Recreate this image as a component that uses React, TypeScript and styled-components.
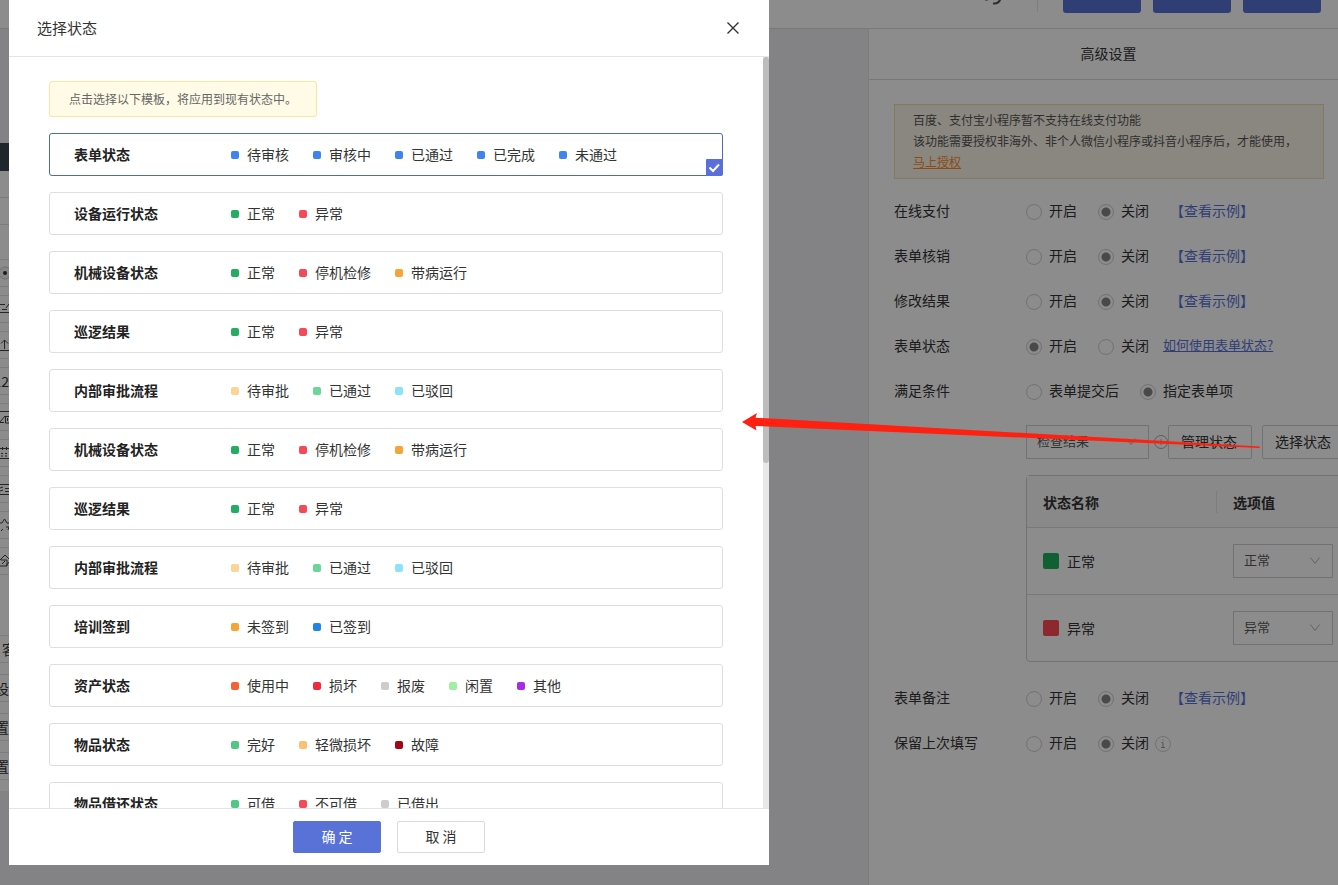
import React, { useState } from "react";
import styled, { createGlobalStyle } from "styled-components";

const brand = "#5872d8";

const GlobalStyle = createGlobalStyle`
  *, *::before, *::after { box-sizing: border-box; }
  body { margin: 0; overflow: hidden; }
  body, button, input, select {
    font-family: "Noto Sans CJK SC", "Noto Sans", sans-serif;
    font-size: 14px;
    color: #333;
  }
  button { cursor: pointer; }
`;

const Page = styled.div`
  position: relative;
  display: flex;
  flex-direction: column;
  height: 100vh;
  overflow: hidden;
  background: #eeeef2;
`;

/* ---------- top bar ---------- */

const TopBar = styled.header`
  display: flex;
  justify-content: flex-end;
  flex: none;
  height: 29px;
  padding-right: 17px;
  overflow: hidden;
  background: #fff;
  border-bottom: 1px solid #dcdcdf;
`;

const TopActions = styled.div`
  display: flex;
  align-items: center;
  gap: 12px;
  height: 32px;
  margin-top: -19px;
`;

const TopButton = styled.button`
  width: 78px;
  height: 32px;
  border: 0;
  border-radius: 3px;
  background: ${brand};
`;

const TopDivider = styled.span`
  width: 1px;
  height: 30px;
  margin-right: 13px;
  background: #e6e6e6;
`;

const TopMark = styled.svg`
  align-self: flex-end;
  margin-right: 22px;
  margin-bottom: 8px;
`;

/* ---------- work area ---------- */

const Workspace = styled.div`
  display: flex;
  flex: 1;
  min-height: 0;
`;

const Palette = styled.aside`
  flex: none;
  width: 9px;
  padding-top: 114px;
  overflow: hidden;
`;

const PaletteHead = styled.div`
  height: 28px;
  background: #3a4750;
`;

const PaletteBody = styled.div`
  padding: 26px 0 11px;
  background: #fff;
`;

const PaletteGroup = styled.div<{ $gap: number; $after: number }>`
  display: flex;
  flex-direction: column;
  gap: ${(p) => p.$gap}px;
  margin-bottom: ${(p) => p.$after}px;
`;

const PaletteItem = styled.button<{ $start?: boolean }>`
  display: flex;
  align-items: center;
  justify-content: ${(p) => (p.$start ? "flex-start" : "flex-end")};
  height: 28px;
  padding: 0 0 0 ${(p) => (p.$start ? 2 : 0)}px;
  border: solid #e2e2e2;
  border-width: 1px 0;
  background: #fff;
  font-size: 14px;
  line-height: 20px;
  white-space: nowrap;
`;

const Canvas = styled.main`
  flex: 1;
`;

const Settings = styled.aside`
  flex: none;
  width: 480px;
  margin-right: -10px;
  background: #fff;
  border-left: 1px solid #e4e4e8;
`;

const SettingsTitle = styled.h2`
  margin: 0;
  height: 51px;
  border-bottom: 1px solid #dadada;
  font-size: 14px;
  font-weight: 400;
  line-height: 48px;
  text-align: center;
`;

const SettingsBody = styled.div`
  padding: 24px 24px 0 25px;
`;

const AuthNotice = styled.p`
  margin: 0 0 8px;
  padding: 4px 18px 6px;
  border: 1px solid #eedcae;
  background: #fbf6e9;
  font-size: 12px;
  line-height: 21px;
  color: #555;
`;

const OrangeLink = styled.a`
  display: block;
  width: max-content;
  color: #ff8a1f;
`;

const SettingRow = styled.fieldset`
  display: flex;
  align-items: center;
  height: 45px;
  margin: 0;
  padding: 0;
  border: 0;
  line-height: 20px;
`;

const SettingName = styled.span`
  flex: none;
  width: 132px;
`;

const RadioLabel = styled.label`
  display: flex;
  align-items: center;
  gap: 7px;
  margin-right: 21px;
  white-space: nowrap;
`;

const Radio = styled.input`
  appearance: none;
  width: 16px;
  height: 16px;
  margin: 4px 0 0;
  border: 1px solid #cfcfcf;
  border-radius: 50%;
  background: #fff;
  &:checked {
    background: radial-gradient(circle, #858585 0 4px, transparent 5px);
  }
`;

const ExampleLink = styled.a`
  color: ${brand};
  text-decoration: none;
`;

const HelpLink = styled.a`
  margin-left: -7px;
  color: ${brand};
  font-size: 13px;
`;

const InfoIcon = styled.svg`
  flex: none;
  margin: 4px 0 0 -15px;
`;

const Nested = styled.div`
  margin: 13px -48px 12px 132px;
`;

const FieldLine = styled.div`
  display: flex;
  align-items: center;
  margin-bottom: 16px;
`;

const SelectBox = styled.span<{ $width: number }>`
  display: grid;
  align-items: center;
  width: ${(p) => p.$width}px;
  height: 34px;
  svg {
    grid-area: 1 / 1;
    justify-self: end;
    margin-right: 12px;
    pointer-events: none;
  }
`;

const Select = styled.select`
  grid-area: 1 / 1;
  appearance: none;
  width: 100%;
  height: 34px;
  padding: 0 10px 3px;
  border: 1px solid #d0d0d0;
  border-radius: 0;
  background: #fff;
  color: #5a5a5a;
  font-size: 13px;
`;

const PlusIcon = styled.svg`
  flex: none;
  margin-left: 4px;
`;

const OutlineButton = styled.button`
  flex: none;
  width: 84px;
  height: 34px;
  margin-right: 10px;
  padding: 0 2px 2px 0;
  border: 1px solid #d0d0d0;
  border-radius: 2px;
  background: #fff;
`;

const StatusTable = styled.table`
  width: 100%;
  border: 1px solid #d0d0d0;
  border-radius: 4px;
  border-spacing: 0;
  table-layout: fixed;
  th, td {
    padding: 0 0 0 16px;
    text-align: left;
    line-height: 20px;
  }
  th { height: 51px; background: #fafafa; }
  td { height: 67px; border-top: 1px solid #dcdcdc; }
  th:first-child, td:first-child { width: 190px; }
`;

const HeadCell = styled.div`
  display: flex;
  align-items: center;
  justify-content: space-between;
`;

const HeadDivider = styled.span`
  width: 1px;
  height: 22px;
  background: #e4e4e4;
`;

const Status = styled.span`
  display: flex;
  align-items: center;
  gap: 8px;
`;

const Swatch = styled.span<{ $color: string }>`
  width: 16px;
  height: 16px;
  border-radius: 2px;
  background: ${(p) => p.$color};
`;

/* ---------- dialog ---------- */

const Mask = styled.div`
  position: absolute;
  inset: 0;
  padding: 0 9px 20px;
  background: rgba(0, 0, 0, 0.45);
`;

const Dialog = styled.section`
  display: flex;
  flex-direction: column;
  width: 760px;
  max-width: 100%;
  height: 100%;
  background: #fff;
`;

const DialogHead = styled.header`
  display: flex;
  align-items: center;
  justify-content: space-between;
  flex: none;
  height: 57px;
  padding: 0 28px;
  border-bottom: 1px solid #e4e4e4;
`;

const DialogTitle = styled.h1`
  margin: 0;
  padding-bottom: 2px;
  font-size: 15px;
  font-weight: 400;
`;

const CloseButton = styled.button`
  display: grid;
  place-items: center;
  width: 16px;
  height: 16px;
  padding: 0;
  border: 0;
  background: none;
`;

const DialogMain = styled.div`
  display: flex;
  flex: 1;
  min-height: 0;
`;

const ScrollArea = styled.div`
  flex: 1;
  padding: 24px 40px 0;
  overflow: hidden;
`;

const ScrollTrack = styled.div`
  flex: none;
  width: 6px;
  background: #e8e8e8;
`;

const ScrollThumb = styled.div`
  height: 54%;
  border-radius: 3px;
  background: #bdbdbd;
`;

const Tip = styled.p`
  width: max-content;
  margin: 0 0 16px;
  padding: 0 19px;
  border: 1px solid #f5e8a0;
  border-radius: 3px;
  background: #fffbe6;
  color: #666;
  font-size: 12px;
  line-height: 34px;
`;

const Template = styled.label<{ $active: boolean }>`
  position: relative;
  display: flex;
  align-items: center;
  height: 43px;
  margin-bottom: 16px;
  padding: 0 0 2px 24px;
  border: 1px solid ${(p) => (p.$active ? "#5069b8" : "#dedede")};
  border-radius: 3px;
  line-height: 20px;
  cursor: pointer;
`;

const HiddenRadio = styled.input`
  position: absolute;
  opacity: 0;
  pointer-events: none;
`;

const TemplateName = styled.strong`
  flex: none;
  width: 157px;
  font-weight: 700;
  color: #222;
`;

const Options = styled.span`
  display: flex;
  gap: 24px;
`;

const Option = styled.span`
  display: flex;
  align-items: center;
  gap: 8px;
`;

const Dot = styled.span<{ $color: string }>`
  width: 8px;
  height: 8px;
  margin-top: 2px;
  border-radius: 2px;
  background: ${(p) => p.$color};
`;

const CheckBadge = styled.svg`
  position: absolute;
  right: -1px;
  bottom: -1px;
`;

const DialogFoot = styled.footer`
  display: flex;
  justify-content: center;
  gap: 16px;
  flex: none;
  height: 57px;
  padding-top: 12px;
  border-top: 1px solid #e4e4e4;
`;

const FootButton = styled.button<{ $primary?: boolean }>`
  width: 88px;
  height: 32px;
  padding: 0 0 2px;
  border: 1px solid ${(p) => (p.$primary ? brand : "#d9d9d9")};
  border-radius: 2px;
  background: ${(p) => (p.$primary ? brand : "#fff")};
  color: ${(p) => (p.$primary ? "#fff" : "#333")};
`;

const Arrow = styled.svg`
  position: absolute;
  top: 412px;
  left: 742px;
  pointer-events: none;
`;

/* ---------- data ---------- */

const blue = "#3f83f0";
const green = "#23ac62";
const red = "#f5495a";
const orange = "#f7a436";

type TemplateData = { name: string; options: [string, string][] };

const machine: TemplateData = {
  name: "机械设备状态",
  options: [["正常", green], ["停机检修", red], ["带病运行", orange]],
};
const patrol: TemplateData = { name: "巡逻结果", options: [["正常", green], ["异常", red]] };
const approval: TemplateData = {
  name: "内部审批流程",
  options: [["待审批", "#fcd497"], ["已通过", "#6bd69a"], ["已驳回", "#8fe0fb"]],
};

const templates: TemplateData[] = [
  {
    name: "表单状态",
    options: [["待审核", blue], ["审核中", blue], ["已通过", blue], ["已完成", blue], ["未通过", blue]],
  },
  { name: "设备运行状态", options: [["正常", green], ["异常", red]] },
  machine,
  patrol,
  approval,
  machine,
  patrol,
  approval,
  { name: "培训签到", options: [["未签到", orange], ["已签到", "#1f86e8"]] },
  {
    name: "资产状态",
    options: [["使用中", "#f26334"], ["损坏", "#ee2a3f"], ["报废", "#cccccc"], ["闲置", "#a2eda6"], ["其他", "#a82ae6"]],
  },
  { name: "物品状态", options: [["完好", "#52c785"], ["轻微损坏", "#fdc072"], ["故障", "#a30514"]] },
  { name: "物品借还状态", options: [["可借", "#52c785"], ["不可借", red], ["已借出", "#cccccc"]] },
];

const switches = ["开启", "关闭"];
const stroke = { fill: "none", stroke: "#444", strokeWidth: 1 };

const fieldIcons: [string, React.ReactNode][] = [
  ["单选", <><circle cx="5" cy="13" r="6" fill="#f4f4f4" stroke="#ccc" /><circle cx="5" cy="13" r="2" fill="#333" /></>],
  ["多行文字", <path {...stroke} d="M0 8.500h5M2 13.500h5M6 12l3-4M0 16.500h9" />],
  ["上传", <path {...stroke} d="M0 18.500h9M4.500 17V8M1 11.500l3.500-3.500L8 11.500" />],
  ["图片", <path {...stroke} d="M0 7.500h9M0 18l5-6M0 18.500h4M5.500 12v7H9M5.500 12.500H9M7.500 14v3" />],
  ["表格", <path {...stroke} d="M0 8.500h9M0 18.500h9M2.500 7v3M6.500 7v3M1 13.500h2M5 13.500h2M1 16h2M5 16h2" />],
  ["列表", <path {...stroke} d="M0 8.500h9M0 18.500h9M0 12l3-1M0 15l3-1M5 12.500h4M5 15.500h4" />],
  ["评分", <path {...stroke} d="M0 11h2l2.500-4L7 11h2M1 19l2-2M6 15h3l-1 3" />],
  ["签名", <path {...stroke} d="M0 12l5-5 4 4M1 12h6v6H0M6 18l3-4M2 16l3-3" />],
];

/* ---------- pieces ---------- */

function Chevron() {
  return (
    <svg width="12" height="12" viewBox="0 0 12 12" fill="none" stroke="#b5b5b5">
      <path d="M1.500 2.500l4.500 6 4.500-6" />
    </svg>
  );
}

function PickField({ label, value, width }: { label: string; value: string; width: number }) {
  return (
    <SelectBox $width={width}>
      <Select aria-label={label} defaultValue={value}>
        <option>{value}</option>
      </Select>
      <Chevron />
    </SelectBox>
  );
}

function Setting(props: { name: string; choices?: string[]; picked: number; children?: React.ReactNode }) {
  const { name, choices = switches, picked, children } = props;
  return (
    <SettingRow aria-label={name}>
      <SettingName>{name}</SettingName>
      {choices.map((choice, i) => (
        <RadioLabel key={choice}>
          <Radio type="radio" name={name} defaultChecked={i === picked} />
          {choice}
        </RadioLabel>
      ))}
      {children}
    </SettingRow>
  );
}

const Example = () => <ExampleLink href="#example">【查看示例】</ExampleLink>;

function PalettePanel() {
  const icon = ([name, art]: [string, React.ReactNode]) => (
    <PaletteItem key={name} aria-label={name}>
      <svg width="9" height="26" viewBox="0 0 9 26">{art}</svg>
    </PaletteItem>
  );
  return (
    <Palette>
      <PaletteHead />
      <PaletteBody>
        <PaletteGroup $gap={8} $after={34}>
          <PaletteItem aria-label="字段" />
        </PaletteGroup>
        <PaletteGroup $gap={8} $after={60}>
          {fieldIcons.slice(0, 3).map(icon)}
          <PaletteItem>12</PaletteItem>
          {fieldIcons.slice(3).map(icon)}
        </PaletteGroup>
        <PaletteGroup $gap={11} $after={0}>
          <PaletteItem $start>客</PaletteItem>
          <PaletteItem>设</PaletteItem>
          <PaletteItem>置</PaletteItem>
          <PaletteItem>置</PaletteItem>
        </PaletteGroup>
      </PaletteBody>
    </Palette>
  );
}

function SettingsPanel() {
  return (
    <Settings>
      <SettingsTitle>高级设置</SettingsTitle>
      <SettingsBody>
        <AuthNotice>
          百度、支付宝小程序暂不支持在线支付功能
          <br />
          该功能需要授权非海外、非个人微信小程序或抖音小程序后，才能使用，
          <OrangeLink href="#auth">马上授权</OrangeLink>
        </AuthNotice>
        <Setting name="在线支付" picked={1}><Example /></Setting>
        <Setting name="表单核销" picked={1}><Example /></Setting>
        <Setting name="修改结果" picked={1}><Example /></Setting>
        <Setting name="表单状态" picked={0}>
          <HelpLink href="#help">如何使用表单状态?</HelpLink>
        </Setting>
        <Setting name="满足条件" choices={["表单提交后", "指定表单项"]} picked={1} />
        <Nested>
          <FieldLine>
            <PickField label="表单项" value="检查结果" width={123} />
            <PlusIcon width="15" height="16" viewBox="0 0 15 16" fill="none" stroke="#aaa">
              <circle cx="8" cy="8" r="6.500" />
              <path d="M8 5v6M5 8h6" />
            </PlusIcon>
            <OutlineButton>管理状态</OutlineButton>
            <OutlineButton>选择状态</OutlineButton>
          </FieldLine>
          <StatusTable>
            <thead>
              <tr>
                <th><HeadCell>状态名称<HeadDivider /></HeadCell></th>
                <th>选项值</th>
              </tr>
            </thead>
            <tbody>
              {[["正常", "#20b060"], ["异常", "#ff4a55"]].map(([name, color]) => (
                <tr key={name}>
                  <td><Status><Swatch $color={color} />{name}</Status></td>
                  <td><PickField label={name} value={name} width={100} /></td>
                </tr>
              ))}
            </tbody>
          </StatusTable>
        </Nested>
        <Setting name="表单备注" picked={1}><Example /></Setting>
        <Setting name="保留上次填写" picked={1}>
          <InfoIcon width="16" height="16" viewBox="0 0 16 16" fill="none" stroke="#cfcfcf">
            <circle cx="8" cy="8" r="7.500" />
            <path d="M6.500 6.500h1.500v5M6 11.500h4M7.500 4h1" stroke="#999" />
          </InfoIcon>
        </Setting>
      </SettingsBody>
    </Settings>
  );
}

function StatusDialog() {
  const [selected, setSelected] = useState(0);
  return (
    <Dialog role="dialog" aria-labelledby="dialog-title">
      <DialogHead>
        <DialogTitle id="dialog-title">选择状态</DialogTitle>
        <CloseButton aria-label="关闭">
          <svg width="12" height="14" viewBox="0 0 12 14" fill="none" stroke="#333" strokeWidth="1.400">
            <path d="M0.500 1.500l11 11M11.500 1.500l-11 11" />
          </svg>
        </CloseButton>
      </DialogHead>
      <DialogMain>
        <ScrollArea>
          <Tip>点击选择以下模板，将应用到现有状态中。</Tip>
          {templates.map((t, i) => (
            <Template key={i} $active={i === selected}>
              <HiddenRadio type="radio" name="template" checked={i === selected} onChange={() => setSelected(i)} />
              <TemplateName>{t.name}</TemplateName>
              <Options>
                {t.options.map(([text, color]) => (
                  <Option key={text}><Dot $color={color} />{text}</Option>
                ))}
              </Options>
              {i === selected && (
                <CheckBadge width="17" height="17" viewBox="0 0 17 17">
                  <path d="M1 0h16v15a2 2 0 0 1-2 2H0V1a1 1 0 0 1 1-1z" fill="#5b6fdc" />
                  <path d="M3.500 8.500l3.500 3.500 6-6.500" fill="none" stroke="#fff" strokeWidth="2" />
                </CheckBadge>
              )}
            </Template>
          ))}
        </ScrollArea>
        <ScrollTrack><ScrollThumb /></ScrollTrack>
      </DialogMain>
      <DialogFoot>
        <FootButton $primary>确 定</FootButton>
        <FootButton>取 消</FootButton>
      </DialogFoot>
    </Dialog>
  );
}

export default function App() {
  return (
    <>
      <GlobalStyle />
      <Page>
        <TopBar>
          <TopActions>
            <TopMark width="19" height="8" viewBox="0 0 19 8" fill="none" stroke="#555" strokeWidth="2">
              <path d="M1 2.500h3M17 0c-1 5-4 7-8 6.500" />
            </TopMark>
            <TopDivider />
            <TopButton aria-label="预览" />
            <TopButton aria-label="保存" />
            <TopButton aria-label="发布" />
          </TopActions>
        </TopBar>
        <Workspace>
          <PalettePanel />
          <Canvas />
          <SettingsPanel />
        </Workspace>
        <Mask><StatusDialog /></Mask>
        <Arrow width="518" height="37" viewBox="0 0 518 37">
          <path d="M0 10L15 1l-1.500 4.700L518 34.500l-.500 1.500L13.500 14l1 4.500z" fill="#ff2010" />
        </Arrow>
      </Page>
    </>
  );
}
